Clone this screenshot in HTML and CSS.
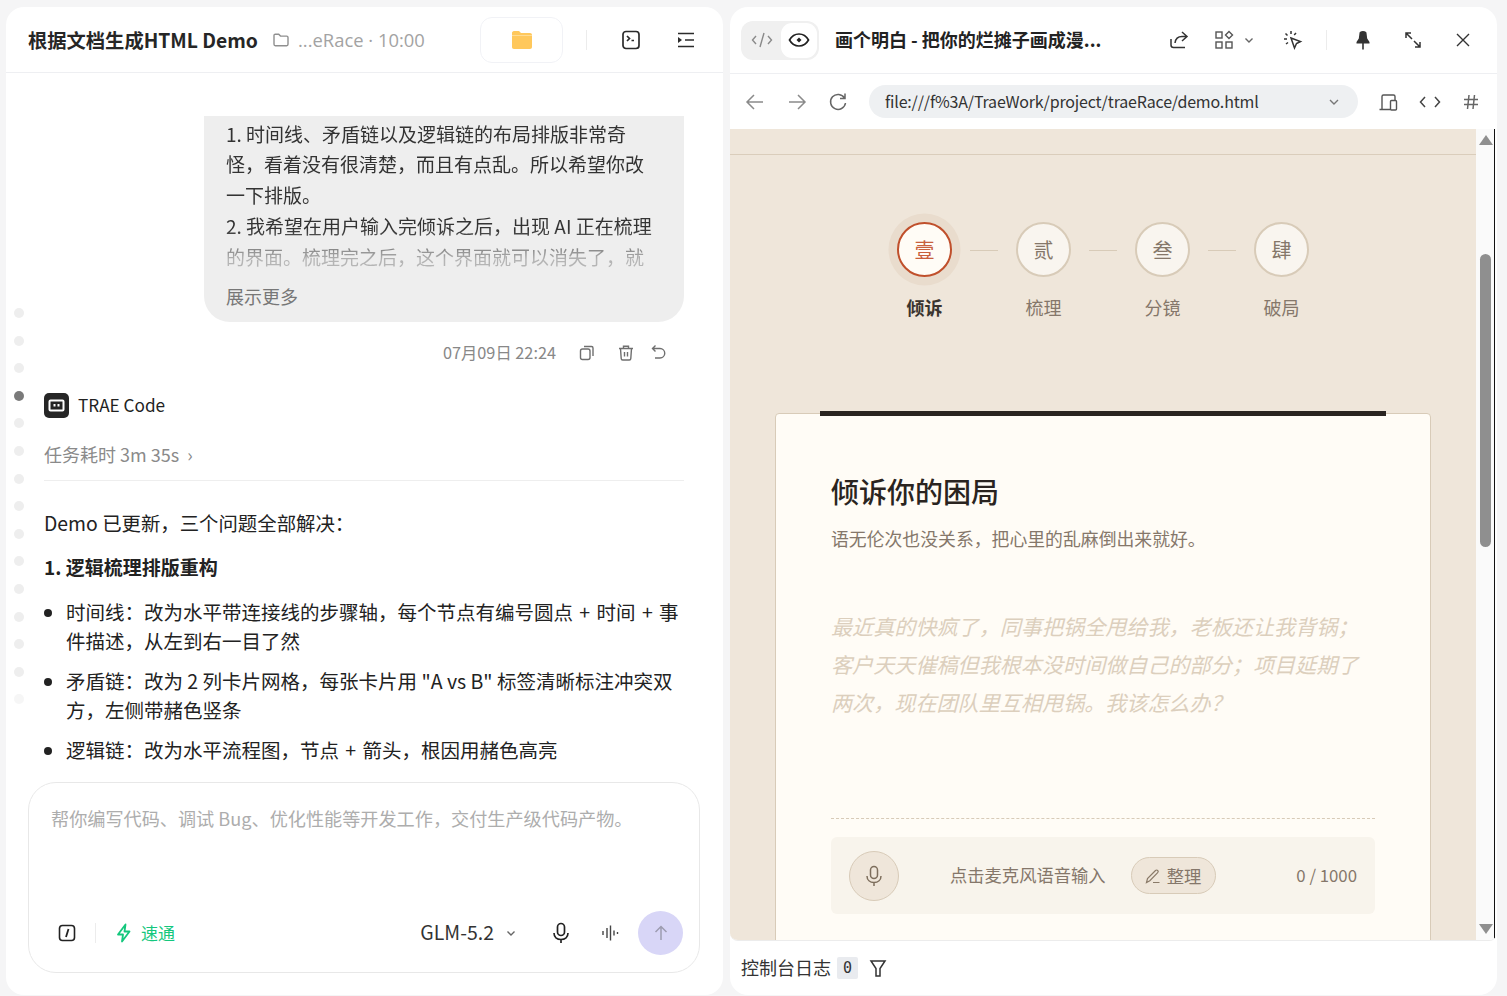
FILE: index.html
```html
<!DOCTYPE html>
<html lang="en">
<head>
  <meta charset="UTF-8" />
  <title>TRAE Demo</title>
  <link rel="stylesheet" href="styles.css">
</head>
<body>
<div class="app">

  <!-- LEFT: CHAT PANEL -->
  <div class="panel chat-panel">
    <div class="chat-header">
      <div class="chat-title">根据文档生成HTML Demo</div>
      <svg class="path-icon" width="18" height="18" viewBox="0 0 18 18" fill="none" stroke="#8f8f8f" stroke-width="1.4"><path d="M2 4.500c0-.8.6-1.300 1.300-1.300h3.400l1.800 1.900h6.200c.7 0 1.300.6 1.300 1.300v6.900c0 .8-.6 1.400-1.300 1.400H3.300c-.7 0-1.300-.6-1.300-1.400z"/></svg>
      <div class="chat-path">...eRace · 10:00</div>
      <div class="folder-btn">
        <svg width="20" height="18" viewBox="0 0 20 18"><path d="M0 2c0-1 .7-2 2-2h5l2 2h9c1.200 0 2 .8 2 2v12c0 1.200-.8 2-2 2H2c-1.300 0-2-.8-2-2z" fill="#ffc85c"/><path d="M0 4h20v1H0z" fill="#ffdc94"/></svg>
      </div>
      <div class="v-sep"></div>
      <svg class="hd-icon" width="20" height="20" viewBox="0 0 20 20" fill="none" stroke="#2b2b2b" stroke-width="1.700"><rect x="2" y="1.500" width="16" height="17" rx="3"/><path d="M6 6l2.500 2.500L6 11M10.500 10.500h2.500"/></svg>
      <svg class="hd-icon last" width="20" height="20" viewBox="0 0 20 20" fill="none" stroke="#2b2b2b" stroke-width="1.700"><path d="M2 3.500h16M9 10h9M2 16.500h16"/><path d="M2 7l4 3-4 3z" fill="#2b2b2b" stroke="none"/></svg>
    </div>

    <div class="chat-body">
      <div class="bubble">
        <div class="bubble-text">
          1. 时间线、矛盾链以及逻辑链的布局排版非常奇<br>
          怪，看着没有很清楚，而且有点乱。所以希望你改<br>
          一下排版。<br>
          2. 我希望在用户输入完倾诉之后，出现 AI 正在梳理<br>
          的界面。梳理完之后，这个界面就可以消失了，就
        </div>
        <div class="show-more">展示更多</div>
      </div>

      <div class="msg-meta">
        <span>07月09日 22:24</span>
        <svg class="copy" width="18" height="18" viewBox="0 0 18 18" fill="none" stroke="#6f6f6f" stroke-width="1.400"><rect x="2.500" y="5" width="9.500" height="10.500" rx="2"/><path d="M6 2.500h7.500c1 0 1.500.6 1.500 1.500v8"/></svg>
        <svg class="trash" width="18" height="18" viewBox="0 0 18 18" fill="none" stroke="#6f6f6f" stroke-width="1.400"><path d="M2 4.500h14M6.500 4.500V2.300h5v2.200M3.500 4.500l.7 10c0 1 .6 1.500 1.500 1.500h6.600c.9 0 1.500-.5 1.500-1.500l.7-10M7.500 8v4.500M10.500 8v4.500"/></svg>
        <svg class="undo" width="18" height="18" viewBox="0 0 18 18" fill="none" stroke="#6f6f6f" stroke-width="1.400"><path d="M5.500 1.500L2.500 4.500l3 3M2.500 4.500h7.500a4.500 4.500 0 0 1 0 9.500H5"/></svg>
      </div>

      <div class="bot-row">
        <svg width="25" height="25" viewBox="0 0 25 25"><rect width="25" height="25" rx="5" fill="#262626"/><rect x="5.500" y="7.500" width="14" height="10" rx="1" fill="none" stroke="#fff" stroke-width="2"/><path d="M9.500 11h2v2.500h-2zM13.500 11h2v2.500h-2z" fill="#fff"/></svg>
        <span>TRAE Code</span>
      </div>

      <div class="task-time">任务耗时 3m 35s <span class="task-arrow">›</span></div>

      <p class="answer">Demo 已更新，三个问题全部解决：</p>
      <p class="answer-head">1. 逻辑梳理排版重构</p>
      <ul class="answer-list">
        <li class="wide">时间线：改为水平带连接线的步骤轴，每个节点有编号圆点 + 时间 + 事件描述，从左到右一目了然</li>
        <li>矛盾链：改为 2 列卡片网格，每张卡片用 "A vs B" 标签清晰标注冲突双方，左侧带赭色竖条</li>
        <li class="wide">逻辑链：改为水平流程图，节点 + 箭头，根因用赭色高亮</li>
      </ul>
    </div>

    <!-- timeline dots, sit over the chat -->
    <div class="dots">
      <i></i><i></i><i></i><i class="on"></i><i></i><i></i><i></i><i></i><i></i><i></i><i></i><i></i><i></i><i></i><i class="cut"></i>
    </div>

    <div class="composer">
      <div class="composer-hint">帮你编写代码、调试 Bug、优化性能等开发工作，交付生产级代码产物。</div>
      <div class="composer-bar">
        <svg class="slash" width="18" height="18" viewBox="0 0 18 18" fill="none" stroke="#222" stroke-width="1.600"><rect x="1.500" y="1.500" width="15" height="15" rx="3"/><path d="M10.500 5l-2.500 8" stroke-width="1.800"/></svg>
        <div class="v-sep small"></div>
        <svg class="bolt" width="18" height="20" viewBox="0 0 18 20" fill="none" stroke="#14c77d" stroke-width="1.800" stroke-linejoin="round"><path d="M10.500 1.500L3 11.500h5l-1 7 7.500-10h-5z"/></svg>
        <span class="speed">速通</span>
        <span class="model">GLM-5.2</span>
        <svg class="chev" width="12" height="12" viewBox="0 0 12 12" fill="none" stroke="#666" stroke-width="1.400"><path d="M2.500 4.500L6 8l3.500-3.500"/></svg>
        <svg class="mic" width="20" height="22" viewBox="0 0 20 22" fill="none" stroke="#222" stroke-width="1.700"><rect x="6.500" y="1.500" width="7" height="12" rx="3.500"/><path d="M3 11c0 4 3 6.500 7 6.500s7-2.500 7-6.500M10 17.500v3.500"/></svg>
        <svg class="wave" width="18" height="18" viewBox="0 0 18 18" fill="none" stroke="#444" stroke-width="1.400"><path d="M2 7v4M6 4v10M9.500 1.500v15M13 6.500v5M16.500 8v2"/></svg>
        <div class="send">
          <svg width="18" height="18" viewBox="0 0 18 18" fill="none" stroke="#9d9cb0" stroke-width="1.500"><path d="M9 16V2.500M3.500 8L9 2.500 14.500 8"/></svg>
        </div>
      </div>
    </div>
  </div>

  <!-- RIGHT: PREVIEW PANEL -->
  <div class="panel preview-panel">
    <div class="preview-header">
      <div class="mode-switch">
        <div class="mode code">
          <svg width="22" height="18" viewBox="0 0 22 18" fill="none" stroke="#8a8a8a" stroke-width="1.400"><path d="M5 5L1.500 9 5 13M17 5l3.500 4-3.500 4M13 2L9 16"/></svg>
        </div>
        <div class="mode eye">
          <svg width="22" height="18" viewBox="0 0 22 18" fill="none" stroke="#222" stroke-width="1.700"><path d="M1.500 9C4 4.500 7 3 11 3s7 1.500 9.500 6c-2.500 4.500-5.500 6-9.500 6S4 13.500 1.500 9z"/><path d="M11 6.500L13.500 9 11 11.500 8.500 9z" fill="#222" stroke="none"/></svg>
        </div>
      </div>
      <div class="preview-title">画个明白 - 把你的烂摊子画成漫...</div>
      <svg class="share" width="20" height="20" viewBox="0 0 20 20" fill="none" stroke="#333" stroke-width="1.500"><path d="M2 9v6c0 1.500.8 2.500 2.500 2.500H16M13 2l5 4.500-5 4.500M18 6.500h-5C8.500 6.500 6.500 9 6 13"/></svg>
      <svg class="grid" width="20" height="20" viewBox="0 0 20 20" fill="none" stroke="#555" stroke-width="1.400"><rect x="2" y="2" width="6" height="6"/><rect x="2" y="12" width="6" height="6"/><rect x="12" y="12" width="6" height="6"/><path d="M15 1.500L18.500 5 15 8.500 11.500 5z"/></svg>
      <svg class="grid-chev" width="12" height="12" viewBox="0 0 12 12" fill="none" stroke="#666" stroke-width="1.400"><path d="M2.500 4.500L6 8l3.500-3.500"/></svg>
      <svg class="pick" width="20" height="20" viewBox="0 0 20 20" fill="none" stroke="#333" stroke-width="1.500"><path d="M8 8l9.500 3.500-4 2-2 4.500z"/><path d="M8 1v3M2.500 3.500l2 2M1 9h3M3 14l2-1.500M13 3l-1.800 2"/></svg>
      <div class="v-sep"></div>
      <svg class="pin" width="20" height="20" viewBox="0 0 20 20" fill="#333"><path d="M6.500 3c0-1 1-2 3.500-2s3.500 1 3.500 2l.7 5.500 2.300 3.500v1.500h-13V12l2.300-3.500zM9.200 13h1.600v6.500H9.200z"/></svg>
      <svg class="expand" width="20" height="20" viewBox="0 0 20 20" fill="none" stroke="#333" stroke-width="1.500"><path d="M3 8V3h5M3 3l6 6M17 12v5h-5M17 17l-6-6"/></svg>
      <svg class="close" width="18" height="18" viewBox="0 0 18 18" fill="none" stroke="#333" stroke-width="1.400"><path d="M3 3l12 12M15 3L3 15"/></svg>
    </div>

    <div class="nav-bar">
      <svg class="nav-a" width="20" height="20" viewBox="0 0 20 20" fill="none" stroke="#8a8a8a" stroke-width="1.500"><path d="M18 10H2M9 3l-7 7 7 7"/></svg>
      <svg class="nav-b" width="20" height="20" viewBox="0 0 20 20" fill="none" stroke="#8a8a8a" stroke-width="1.500"><path d="M2 10h16M11 3l7 7-7 7"/></svg>
      <svg class="nav-c" width="20" height="20" viewBox="0 0 20 20" fill="none" stroke="#666" stroke-width="1.500"><path d="M16.500 6A7.500 7.500 0 1 0 17.500 11M17 1.500V6.500h-5"/></svg>
      <div class="url-box">
        <span>file:///f%3A/TraeWork/project/traeRace/demo.html</span>
        <svg width="12" height="12" viewBox="0 0 12 12" fill="none" stroke="#777" stroke-width="1.400"><path d="M2 4l4 4 4-4"/></svg>
      </div>
      <svg class="nav-d" width="20" height="20" viewBox="0 0 20 20" fill="none" stroke="#555" stroke-width="1.400"><path d="M1.500 17.500h11M4 17V4.500C4 3.500 4.500 3 5.500 3h10c1 0 1.500.5 1.500 1.500V8"/><rect x="12.500" y="8.500" width="6" height="9.500" rx="1"/></svg>
      <svg class="nav-e" width="22" height="14" viewBox="0 0 22 14" fill="none" stroke="#444" stroke-width="1.500"><path d="M6 2L1.500 7 6 12M16 2l4.500 5-4.500 5"/></svg>
      <svg class="nav-f" width="16" height="16" viewBox="0 0 16 16" fill="none" stroke="#666" stroke-width="1.500"><path d="M1 5.500h14M1 10.500h14M6 1L4.500 15M11.500 1L10 15"/></svg>
    </div>

    <div class="webview">
      <div class="page">
        <div class="page-rule"></div>

        <div class="steps">
          <div class="step active">
            <div class="step-dot">壹</div>
            <div class="step-name">倾诉</div>
          </div>
          <div class="step-line"></div>
          <div class="step">
            <div class="step-dot">贰</div>
            <div class="step-name">梳理</div>
          </div>
          <div class="step-line"></div>
          <div class="step">
            <div class="step-dot">叁</div>
            <div class="step-name">分镜</div>
          </div>
          <div class="step-line"></div>
          <div class="step">
            <div class="step-dot">肆</div>
            <div class="step-name">破局</div>
          </div>
        </div>

        <div class="card">
          <div class="card-bar"></div>
          <h1 class="card-title">倾诉你的困局</h1>
          <p class="card-sub">语无伦次也没关系，把心里的乱麻倒出来就好。</p>
          <div class="card-hint">
            最近真的快疯了，同事把锅全甩给我，老板还让我背锅；<br>
            客户天天催稿但我根本没时间做自己的部分；项目延期了<br>
            两次，现在团队里互相甩锅。我该怎么办？
          </div>
          <div class="voice-bar">
            <div class="voice-mic">
              <svg width="20" height="22" viewBox="0 0 20 22" fill="none" stroke="#7d6e5c" stroke-width="1.500"><rect x="6.500" y="1.500" width="7" height="12" rx="3.500"/><path d="M3 11c0 4 3 6.500 7 6.500s7-2.500 7-6.500M10 17.500v3.500"/></svg>
            </div>
            <span class="voice-text">点击麦克风语音输入</span>
            <div class="voice-tidy">
              <svg width="16" height="16" viewBox="0 0 16 16" fill="none" stroke="#8a7a68" stroke-width="1.200"><path d="M1.500 14.500l1-4L10.500 2.500c.7-.7 1.500-.7 2.200 0s.7 1.500 0 2.200L4.800 12.700zM8 14.500h6.500"/></svg>
              整理
            </div>
            <span class="voice-count">0 / 1000</span>
          </div>
        </div>
      </div>

      <div class="scroll">
        <div class="scroll-up"></div>
        <div class="scroll-track"><div class="scroll-thumb"></div></div>
        <div class="scroll-down"></div>
      </div>
    </div>

    <div class="console-bar">
      <span class="console-label">控制台日志</span>
      <span class="console-count">0</span>
      <svg width="20" height="20" viewBox="0 0 20 20" fill="none" stroke="#333" stroke-width="1.500"><path d="M3 3h14l-5 7.500V18H8v-7.500z"/></svg>
    </div>
  </div>

</div>
</body>
</html>
```
FILE: styles.css
```css
* {
  margin: 0;
  padding: 0;
  box-sizing: border-box;
}

body, html {
  height: 100%;
  overflow: hidden;
  font-family: "Noto Sans CJK SC", sans-serif;
  background: #f5f5f6;
  color: #222;
}

.app {
  height: 996px;
  padding: 7px 10px 1px 6px;
  display: flex;
  gap: 7px;
}

.panel {
  background: #fff;
  border-radius: 18px;
  display: flex;
  flex-direction: column;
  overflow: hidden;
  position: relative;
}

.chat-panel { width: 717px; }
.preview-panel { width: 767px; }

.v-sep {
  width: 1px;
  height: 20px;
  background: #ececec;
}

/* Chat header */
.chat-header {
  height: 66px;
  flex-shrink: 0;
  display: flex;
  align-items: center;
  padding-left: 22px;
  border-bottom: 1px solid #eeeff2;
}

.chat-title {
  width: 231px;
  font-size: 19.300px;
  font-weight: 700;
  color: #262626;
  white-space: nowrap;
}

.path-icon { margin-left: 13px; }

.chat-path {
  margin-left: 8px;
  font-family: "Open Sans", "Noto Sans CJK SC", sans-serif;
  font-size: 18.400px;
  color: #a3a3a3;
  width: 182px;
  white-space: nowrap;
}

.folder-btn {
  width: 83px;
  height: 46px;
  border: 1px solid #f1f2f6;
  border-radius: 12px;
  display: flex;
  align-items: center;
  justify-content: center;
}

.chat-header .v-sep { margin-left: 23px; }
.hd-icon { margin-left: 34px; }
.hd-icon.last { margin-left: 35px; }

/* Chat body */
.chat-body {
  height: 697px;
  flex-shrink: 0;
  overflow: hidden;
  padding: 43px 39px 0 38px;
}

.bubble {
  margin-left: 160px;
  background: #eeeeee;
  border-radius: 0 0 26px 26px;
  padding: 2.500px 22px 0;
  height: 206px;
  font-size: 19px;
  color: #333;
  white-space: nowrap;
}

.bubble-text {
  line-height: 30.800px;
  -webkit-mask-image: linear-gradient(#000 72%, rgba(0, 0, 0, 0.3) 92%);
  mask-image: linear-gradient(#000 72%, rgba(0, 0, 0, 0.3) 92%);
}

.show-more {
  margin-top: 9px;
  font-size: 18px;
  line-height: 30px;
  color: #777;
}

.msg-meta {
  margin-top: 20px;
  height: 22px;
  display: flex;
  align-items: center;
  justify-content: flex-end;
  font-size: 16.300px;
  color: #888;
}

.msg-meta span { padding-bottom: 2px; }
.msg-meta .copy { margin-left: 22px; }
.msg-meta .trash { margin-left: 21px; }
.msg-meta .undo { margin-left: 15px; margin-right: 16px; }

.bot-row {
  margin-top: 29px;
  height: 25px;
  display: flex;
  align-items: center;
  gap: 9px;
  font-size: 17.200px;
  line-height: 25px;
}

.bot-row span { padding-bottom: 2px; }

.task-time {
  margin-top: 24px;
  padding-bottom: 13px;
  border-bottom: 1px solid #eeeeee;
  font-size: 18px;
  line-height: 25px;
  color: #8a8a8a;
}

.task-arrow { margin-left: 4px; }

.answer {
  margin-top: 27px;
  font-size: 19.400px;
  line-height: 30px;
}

.answer-head {
  margin-top: 14px;
  font-size: 19px;
  line-height: 30px;
  font-weight: 700;
}

.answer-list {
  margin-top: 15px;
  padding-left: 22px;
  font-size: 19.500px;
  line-height: 29px;
}

.answer-list li { margin-bottom: 11px; }
.answer-list .wide { word-spacing: 2px; }

/* timeline dots */
.dots {
  position: absolute;
  left: 8px;
  top: 301px;
  height: 399px;
  overflow: hidden;
  display: flex;
  flex-direction: column;
  gap: 17.600px;
}

.dots i {
  display: block;
  width: 10px;
  height: 10px;
  flex-shrink: 0;
  border-radius: 50%;
  background: #eeeeee;
}

.dots .on { background: #7a7a7a; }
.dots .cut { opacity: 0.5; }

/* Composer */
.composer {
  margin: 12px 23px 0 22px;
  height: 191px;
  border: 1px solid #e8e8e8;
  border-radius: 28px;
  padding: 0 16px 17px 22px;
  display: flex;
  flex-direction: column;
  justify-content: space-between;
}

.composer-hint {
  margin-top: 20px;
  font-size: 18.150px;
  line-height: 30px;
  color: #adadad;
  white-space: nowrap;
}

.composer-bar {
  display: flex;
  align-items: center;
  height: 44px;
  font-size: 19px;
}

.slash { margin-left: 7px; }
.composer-bar .v-sep { margin-left: 19px; }
.bolt { margin-left: 19px; }

.speed {
  margin-left: 8px;
  font-size: 17px;
  padding-bottom: 2px;
  color: #14c77d;
}

.model {
  margin-left: auto;
  padding-bottom: 3px;
  font-size: 19.500px;
  color: #333;
}

.chev { margin-left: 11px; }
.mic { margin-left: 34px; }
.wave { margin-left: 30px; }

.send {
  margin-left: 19px;
  width: 45px;
  height: 44px;
  border-radius: 50%;
  background: #d8d6f7;
  display: flex;
  align-items: center;
  justify-content: center;
}

/* Preview header */
.preview-header {
  height: 67px;
  flex-shrink: 0;
  display: flex;
  align-items: center;
  padding-left: 11px;
  border-bottom: 1px solid #eeeff2;
}

.mode-switch {
  width: 78px;
  height: 39px;
  background: #f0f0f0;
  border-radius: 12px;
  display: flex;
  padding: 2px;
}

.mode {
  flex: 1;
  display: flex;
  align-items: center;
  justify-content: center;
  border-radius: 11px;
}

.mode.code { flex: 0 0 38px; }
.mode.eye { background: #fff; }

.preview-title {
  margin-left: 16px;
  width: 275px;
  padding-bottom: 3px;
  font-size: 18px;
  font-weight: 700;
  color: #222;
  white-space: nowrap;
}

.share { margin-left: 59px; }
.grid { margin-left: 25px; }
.grid-chev { margin-left: 9px; }
.pick { margin-left: 28px; }
.preview-header .v-sep { margin-left: 23px; }
.pin { margin-left: 26px; }
.expand { margin-left: 30px; }
.close { margin-left: 31px; }

/* Nav bar */
.nav-bar {
  height: 55px;
  flex-shrink: 0;
  display: flex;
  align-items: center;
  padding-left: 15px;
}

.nav-b { margin-left: 22px; }
.nav-c { margin-left: 21px; }

.url-box {
  margin-left: 21px;
  width: 489px;
  height: 33px;
  border-radius: 17px;
  background: #eef0f2;
  display: flex;
  align-items: center;
  justify-content: space-between;
  padding: 0 18px 0 16px;
  font-size: 16px;
  letter-spacing: -0.170px;
  color: #333;
}

.url-box span { padding-bottom: 2px; }

.nav-d { margin-left: 20px; }
.nav-e { margin-left: 21px; }
.nav-f { margin-left: 22px; }

/* Web view */
.webview {
  height: 812px;
  flex-shrink: 0;
  display: flex;
  overflow: hidden;
  border-radius: 0 0 8px 8px;
  border-bottom: 1px solid #ececec;
}

.page {
  width: 746px;
  background: #efe6da;
  overflow: hidden;
}

.page-rule {
  height: 1px;
  margin-top: 25px;
  background: #dacdbb;
}

.steps {
  margin-top: 67px;
  display: flex;
  justify-content: center;
  gap: 18px;
}

.step {
  width: 55px;
  display: flex;
  flex-direction: column;
  align-items: center;
}

.step-dot {
  width: 55px;
  height: 55px;
  flex-shrink: 0;
  border-radius: 50%;
  border: 2px solid #d8cbb8;
  background: #f9f5ef;
  display: flex;
  align-items: center;
  justify-content: center;
  font-size: 20px;
  color: #85776a;
}

.step-name {
  margin-top: 17px;
  font-size: 18px;
  line-height: 26px;
  color: #85776a;
  white-space: nowrap;
}

.step.active .step-dot {
  background: #fffcf6;
  border-color: #c0502c;
  color: #c8603c;
  box-shadow: 0 0 0 8.500px #e9dccd;
}

.step.active .step-name {
  font-weight: 700;
  color: #3a342e;
}

.step-line {
  width: 28px;
  height: 1px;
  margin-top: 28px;
  background: #d8cbb8;
}

.card {
  position: relative;
  margin: 93px 45px 0 45px;
  height: 560px;
  background: #fffcf6;
  border: 1px solid #d8cbb8;
  border-radius: 4px;
  padding: 0 55px;
}

.card-bar {
  position: absolute;
  left: 44px;
  right: 44px;
  top: -3px;
  height: 5px;
  background: #2a2420;
}

.card-title {
  margin-top: 58px;
  font-family: "Liberation Serif", "Noto Sans CJK SC", serif;
  font-size: 28px;
  line-height: 44px;
  font-weight: 500;
  color: #2a2420;
}

.card-sub {
  margin-top: 8px;
  font-size: 17.850px;
  line-height: 28px;
  color: #85776a;
  white-space: nowrap;
}

.card-hint {
  margin-top: 55px;
  height: 212px;
  border-bottom: 1px dashed #d8cbb8;
  font-size: 21.100px;
  line-height: 38px;
  font-style: italic;
  color: #dccfbd;
  white-space: nowrap;
}

.voice-bar {
  margin-top: 18px;
  height: 77px;
  background: #f8f4ec;
  border-radius: 6px;
  display: flex;
  align-items: center;
  padding: 0 18px;
  font-size: 17.300px;
  color: #85776a;
}

.voice-mic {
  width: 50px;
  height: 50px;
  border-radius: 50%;
  background: #efe6da;
  border: 1px solid #d8cbb8;
  display: flex;
  align-items: center;
  justify-content: center;
}

.voice-text { margin-left: 51px; padding-bottom: 2px; }

.voice-tidy {
  margin-left: 25px;
  width: 85px;
  height: 37px;
  border-radius: 19px;
  background: #efe6da;
  border: 1px solid #d8cbb8;
  display: flex;
  align-items: center;
  justify-content: center;
  gap: 6px;
}

.voice-count { margin-left: auto; padding-bottom: 2px; font-size: 16.800px; }

/* Fake scrollbar */
.scroll {
  width: 19px;
  background: #fafafa;
  border-right: 1px solid #111;
  display: flex;
  flex-direction: column;
  align-items: center;
  padding: 6px 0 6px 1px;
}

.scroll-up, .scroll-down {
  width: 0;
  height: 0;
  border-left: 7px solid transparent;
  border-right: 7px solid transparent;
}

.scroll-up { border-bottom: 10px solid #8f8f8f; }
.scroll-down { border-top: 10px solid #8f8f8f; }

.scroll-track {
  flex: 1;
  width: 11px;
}

.scroll-thumb {
  width: 11px;
  height: 293px;
  margin-top: 109px;
  background: #8f8f8f;
  border-radius: 6px;
}

/* Console */
.console-bar {
  flex: 1;
  display: flex;
  align-items: center;
  padding: 0 0 0 11px;
  font-size: 18px;
  color: #333;
}

.console-label { padding-bottom: 2px; }

.console-count {
  margin-left: 6px;
  width: 21px;
  height: 22px;
  background: #e9ebef;
  border-radius: 2px;
  font-family: "DejaVu Sans Mono", monospace;
  font-size: 15px;
  line-height: 22px;
  text-align: center;
}

.console-bar svg { margin-left: 10px; }
```
